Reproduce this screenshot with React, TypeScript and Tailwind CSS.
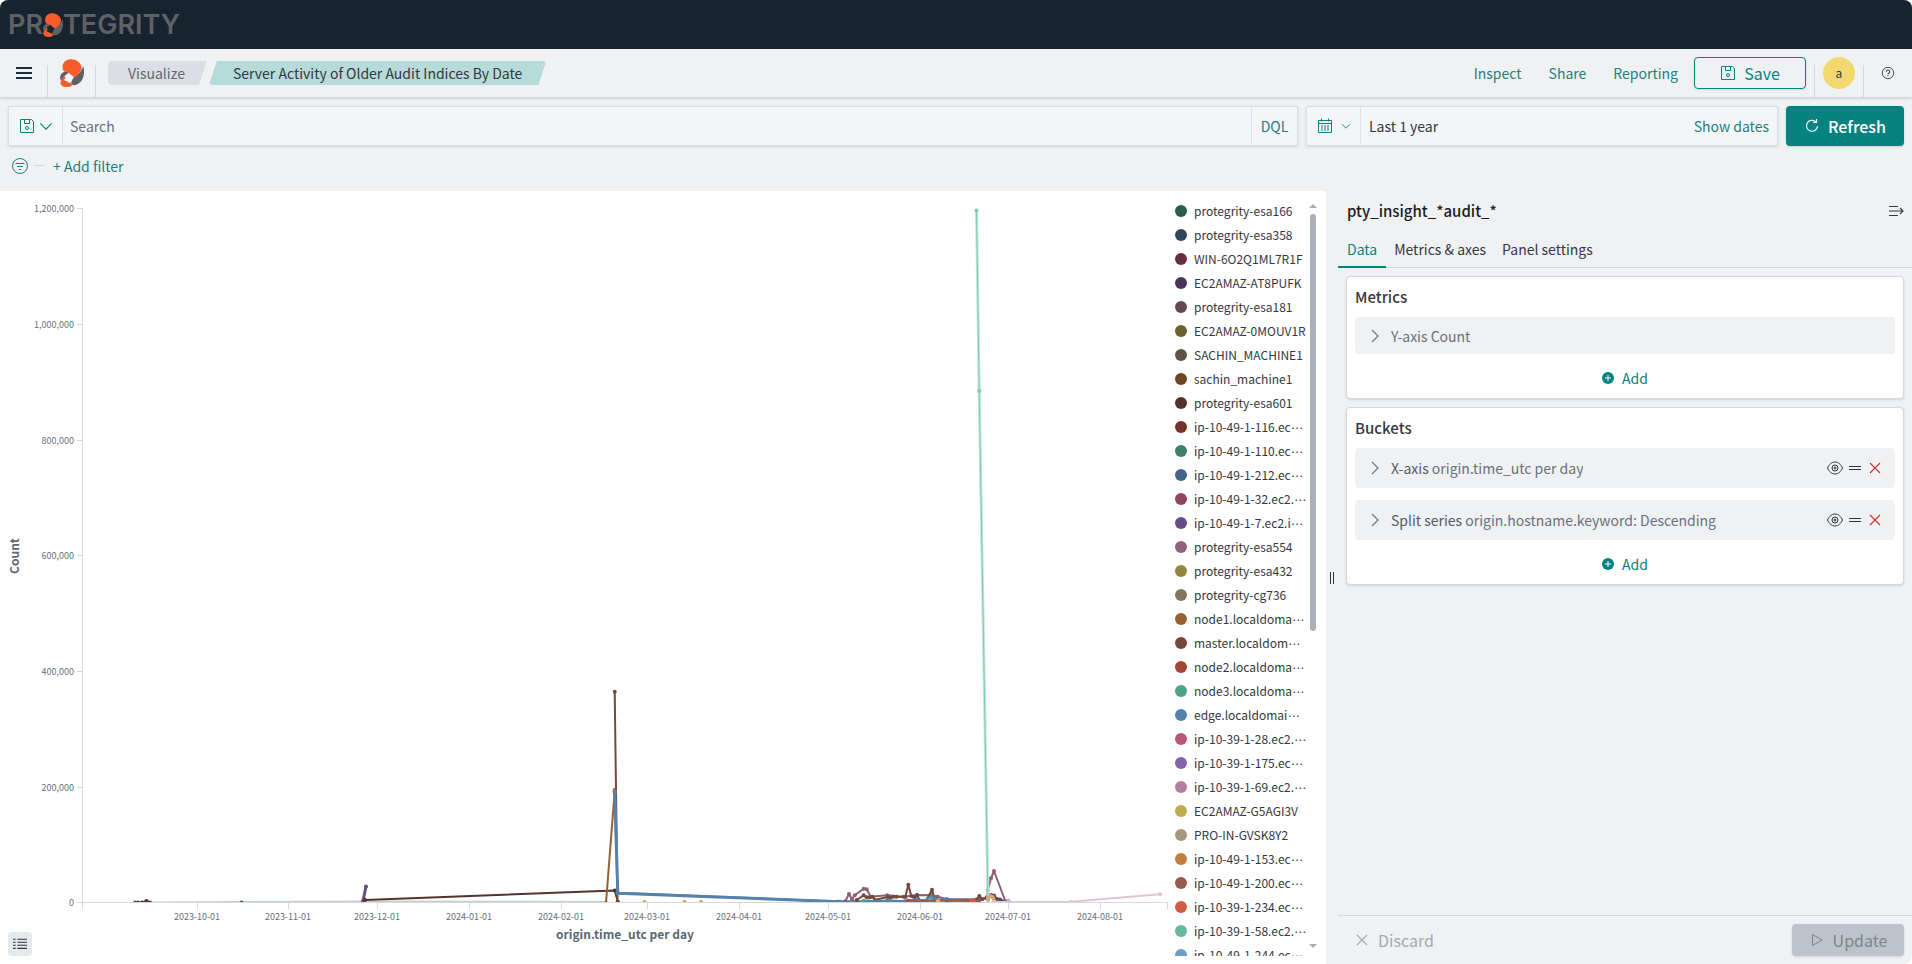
import type { ReactNode } from "react";

type Series = { color: string; points: [number, number][]; dots?: boolean; width?: number };

const legend = [
  { name: "protegrity-esa166", color: "#2b5c4d" },
  { name: "protegrity-esa358", color: "#30475f" },
  { name: "WIN-6O2Q1ML7R1F", color: "#682f42" },
  { name: "EC2AMAZ-AT8PUFK", color: "#48375c" },
  { name: "protegrity-esa181", color: "#654756" },
  { name: "EC2AMAZ-0MOUV1R", color: "#6a602c" },
  { name: "SACHIN_MACHINE1", color: "#5d5443" },
  { name: "sachin_machine1", color: "#6b4623" },
  { name: "protegrity-esa601", color: "#54332b" },
  { name: "ip-10-49-1-116.ec", color: "#733227", cut: true },
  { name: "ip-10-49-1-110.ec", color: "#3d806c", cut: true },
  { name: "ip-10-49-1-212.ec", color: "#436486", cut: true },
  { name: "ip-10-49-1-32.ec2.", color: "#91425e", cut: true },
  { name: "ip-10-49-1-7.ec2.i", color: "#654e81", cut: true },
  { name: "protegrity-esa554", color: "#8e6479" },
  { name: "protegrity-esa432", color: "#95863e" },
  { name: "protegrity-cg736", color: "#82765e" },
  { name: "node1.localdoma", color: "#966231", cut: true },
  { name: "master.localdom", color: "#76483c", cut: true },
  { name: "node2.localdoma", color: "#a14636", cut: true },
  { name: "node3.localdoma", color: "#4ea28a", cut: true },
  { name: "edge.localdomai", color: "#5581ad", cut: true },
  { name: "ip-10-39-1-28.ec2.", color: "#bb5579", cut: true },
  { name: "ip-10-39-1-175.ec", color: "#8265a6", cut: true },
  { name: "ip-10-39-1-69.ec2.", color: "#b57f9b", cut: true },
  { name: "EC2AMAZ-G5AGI3V", color: "#bfac4f" },
  { name: "PRO-IN-GVSK8Y2", color: "#a69779" },
  { name: "ip-10-49-1-153.ec", color: "#c27e40", cut: true },
  { name: "ip-10-49-1-200.ec", color: "#985c4e", cut: true },
  { name: "ip-10-39-1-234.ec", color: "#d05b46", cut: true },
  { name: "ip-10-39-1-58.ec2.", color: "#65baa1", cut: true },
  { name: "ip-10-49-1-244.ec", color: "#6f9cc9", cut: true },
];

const yTicks = [
  { label: "1,200,000", y: 17 },
  { label: "1,000,000", y: 133 },
  { label: "800,000", y: 249 },
  { label: "600,000", y: 364 },
  { label: "400,000", y: 480 },
  { label: "200,000", y: 596 },
  { label: "0", y: 711 },
];

const xTicks = [
  { label: "2023-10-01", x: 197 },
  { label: "2023-11-01", x: 288 },
  { label: "2023-12-01", x: 377 },
  { label: "2024-01-01", x: 469 },
  { label: "2024-02-01", x: 561 },
  { label: "2024-03-01", x: 647 },
  { label: "2024-04-01", x: 739 },
  { label: "2024-05-01", x: 828 },
  { label: "2024-06-01", x: 920 },
  { label: "2024-07-01", x: 1008 },
  { label: "2024-08-01", x: 1100 },
];

const series: Series[] = [
  { color: "#c3cfcb", points: [[150, 711.5], [241, 711], [363, 710.5], [606, 711]], dots: false },
  { color: "#2b5c4d", points: [[135, 711.5], [241.5, 711.5]], width: 0 },
  { color: "#54332b", points: [[138, 711.5], [142, 711.5], [146.5, 710], [150, 711.5]] },
  { color: "#654e81", points: [[363, 710], [366, 695.5]], width: 3 },
  { color: "#54332b", points: [[365, 709], [614.7, 699.5], [618, 711]] },
  { color: "#966231", points: [[606, 712], [614.7, 600]] },
  { color: "#76483c", points: [[614.7, 500.7], [617.5, 711]] },
  { color: "#a14636", points: [[614.7, 599]] },
  { color: "#4ea28a", points: [[614.7, 600.5], [617.5, 701.8], [838, 710.5]] },
  { color: "#5581ad", points: [[614.7, 601.5], [617.8, 702.3], [840, 710.7], [910, 710.7]], width: 3 },
  {
    color: "#8b5f78",
    points: [
      [845.3, 710.3], [849, 703], [852, 708.3], [854.7, 704.3], [863.7, 697.7], [866.7, 698.3], [870.7, 705.7],
      [887.3, 704.3], [903.3, 705.7], [917.3, 704], [932, 704.3], [937.7, 705.7], [946.7, 708.3], [976.7, 708.3],
      [986.7, 707.3], [987.7, 699], [991, 687.3], [994, 680], [1005.3, 710],
    ],
  },
  {
    color: "#76483c",
    points: [
      [856.7, 709], [863.7, 704.3], [866.7, 706.3], [869.7, 706.3], [872.7, 705.7], [875, 709], [887.3, 706],
      [890.3, 706.5], [893.3, 705.7], [896.3, 705.7], [905.3, 706], [908.3, 693.7], [911.3, 705], [914.3, 706.3],
      [917, 704], [920, 709.7], [926, 709.7], [932, 698.7], [934.7, 708.3], [946.7, 709.7], [976.7, 709],
      [979.3, 705], [982.3, 708.3], [986.7, 706.3],
    ],
  },
  { color: "#654756", points: [[991, 704], [994, 704.5], [997, 708], [1000, 708.5], [1002, 710]] },
  { color: "#4ea28a", points: [[863.7, 709.7], [887.3, 710.3], [890, 709.7], [908, 710.3], [932, 709.3]] },
  {
    color: "#5581ad",
    points: [[868, 710.5], [887.3, 709.5], [905, 710.3], [917, 708.3], [923, 710], [932, 705.5], [935, 709], [946.7, 708.3], [970, 710]],
  },
  { color: "#985c4e", points: [[908, 709.5], [911, 710], [973, 709.5], [979, 710]] },
  { color: "#d05b46", points: [[971, 710], [974, 710]] },
  { color: "#c4e6dc", points: [[976.5, 19.5], [979.2, 200], [988, 709]], dots: false, width: 3 },
  { color: "#7cc9b3", points: [[976.5, 19.5], [979.2, 200], [988, 709]], width: 1 },
  { color: "#e0a272", points: [[988, 708], [990.5, 705], [992.5, 706], [994, 710]], width: 3 },
  { color: "#bfac4f", points: [[644.5, 711]] },
  { color: "#bfac4f", points: [[684.5, 711]] },
  { color: "#bfac4f", points: [[701, 711]] },
  { color: "#e3bd56", points: [[938, 710]] },
  { color: "#e2c3d6", points: [[994, 711], [1071.3, 710.7], [1160, 703.3]] },
  { color: "#a9bfdc", points: [[1008.5, 709.5]] },
];

function Icon({ size = 16, className, children }: { size?: number; className?: string; children: ReactNode }) {
  return (
    <svg
      width={size}
      height={size}
      viewBox="0 0 16 16"
      fill="none"
      stroke="currentColor"
      className={className}
      aria-hidden="true"
    >
      {children}
    </svg>
  );
}

const SaveIcon = () => (
  <Icon>
    <path d="M1.5 1.5h11l2 2v11h-13zM5.5 1.5v4h5v-4" />
    <circle cx="8" cy="10" r="1.5" />
  </Icon>
);

const ChevronDown = ({ size }: { size: number }) => (
  <Icon size={size}>
    <path d="M1.5 5L8 11.5 14.5 5" strokeWidth="1.4" />
  </Icon>
);

const ChevronRight = () => (
  <Icon>
    <path d="M5 2l6 6-6 6" strokeWidth="1.1" />
  </Icon>
);

const CrossIcon = ({ className }: { className?: string }) => (
  <Icon className={className}>
    <path d="M3 3l10 10M13 3L3 13" strokeWidth="1.1" />
  </Icon>
);

function BrandMark({ className, core }: { className: string; core: string }) {
  return (
    <svg viewBox="0 0 24 28" preserveAspectRatio="none" className={className} aria-hidden="true">
      <path d="M23 7c2 5 1 10-1 14-2 3-6 6-9 5-2-1-2-3-1-5l2-3c4-2 8-6 9-11z" fill="#606164" />
      <path d="M6 12l3 2c-3 1-6 4-8 8-2-4-1-8 5-10z" fill="#606164" />
      <path d="M4 17l8 8c1 2-2 3-5 3-5 0-8-3-6-6z" fill="#f85c2a" />
      <path d="M8 15.5l5 3.5-3 5-6-3z" fill={core} />
      <path d="M9.5.3c6-.8 11 3 12 7.200.6 4-3 9-7.500 10.500L9 14c-2-1.200-5-1-6-3C1.800 7 3 1.500 9.500.3z" fill="#f85c2a" />
    </svg>
  );
}

function Chart() {
  return (
    <svg
      viewBox="0 0 1168 773"
      preserveAspectRatio="xMinYMin meet"
      className="h-full min-w-0 flex-1 font-['Noto_Sans_CJK_JP',sans-serif]"
      role="img"
      aria-label="Count by origin.time_utc per day"
    >
      <clipPath id="plot">
        <rect x="82" y="10" width="1086" height="701" />
      </clipPath>
      <g stroke="#d6d9dd" shapeRendering="crispEdges">
        <path d="M82.5 17v701M77 711.5h1090.5v6" fill="none" />
        {yTicks.map((t) => (
          <path key={t.label} d={`M77 ${t.y + 0.5}h5`} />
        ))}
        {xTicks.map((t) => (
          <path key={t.label} d={`M${t.x + 0.5} 712v6`} />
        ))}
      </g>
      <g fill="#69707d" fontSize="9">
        {yTicks.map((t) => (
          <text key={t.label} x="74" y={t.y + 4} textAnchor="end">
            {t.label}
          </text>
        ))}
        {xTicks.map((t) => (
          <text key={t.label} x={t.x} y="729" textAnchor="middle">
            {t.label}
          </text>
        ))}
      </g>
      <g fill="#5a6875" fontSize="12" fontWeight="700" textAnchor="middle">
        <text x="625" y="748">origin.time_utc per day</text>
        <text transform="translate(19 365) rotate(-90)">Count</text>
      </g>
      <g clipPath="url(#plot)">
        {series.map((s, i) => (
          <g key={i}>
            <polyline
              points={s.points.join(" ")}
              fill="none"
              stroke={s.color}
              strokeWidth={s.width ?? 2}
              strokeLinejoin="round"
            />
            {s.dots !== false && s.points.map(([x, y]) => <circle key={x} cx={x} cy={y} r="2" fill={s.color} />)}
          </g>
        ))}
      </g>
    </svg>
  );
}

function Legend() {
  return (
    <div className="mt-2 mb-2 flex w-[158px] shrink-0 overflow-hidden">
      <ul className="min-w-0 flex-1 overflow-hidden pl-[7px]">
        {legend.map((item) => (
          <li key={item.name} className="flex h-6 items-center gap-[7px] whitespace-nowrap text-[12px] text-[#343741]">
            <span className="size-3 shrink-0 rounded-full" style={{ backgroundColor: item.color }} />
            <span>
              {item.name}
              {item.cut && <span className="font-['DejaVu_Sans',sans-serif]">⋯</span>}
            </span>
          </li>
        ))}
      </ul>
      <div className="mr-[9px] flex w-2 shrink-0 flex-col items-center pb-2">
        <span className="mt-[5px] border-x-4 border-b-4 border-x-transparent border-b-[#a9b0b9]" />
        <span className="mt-1.5 h-[417px] w-1.5 rounded-full bg-[#a9b0b9]" />
        <span className="mt-auto border-x-4 border-t-4 border-x-transparent border-t-[#a9b0b9]" />
      </div>
    </div>
  );
}

function AddButton() {
  return (
    <div className="flex h-11 items-center justify-center pt-1">
      <button className="flex items-center gap-2 text-[14px] leading-6 text-[#07827e]">
        <svg width="12" height="12" viewBox="0 0 12 12" aria-hidden="true">
          <circle cx="6" cy="6" r="6" fill="currentColor" />
          <path d="M6 3v6M3 6h6" stroke="#fff" />
        </svg>
        Add
      </button>
    </div>
  );
}

function Bucket({ type, field }: { type: string; field: string }) {
  return (
    <div className="flex h-10 items-center rounded bg-[#f0f1f3] px-3">
      <button className="flex min-w-0 flex-1 items-center gap-2 text-left text-[14px] text-[#69707d]">
        <ChevronRight />
        <span className="truncate">
          <span className="text-[#535b67]">{type}</span> {field}
        </span>
      </button>
      <div className="flex items-center gap-1 text-[#263445]">
        <button aria-label="Disable">
          <Icon>
            <path d="M.5 8C2 4.5 4.7 2 8 2S14 4.5 15.5 8c-1.5 3.5-4.2 6-7.5 6S2 11.5.5 8z" />
            <circle cx="8" cy="8" r="3" />
            <circle cx="8" cy="8" r="1" />
          </Icon>
        </button>
        <button aria-label="Reorder">
          <Icon>
            <path d="M2 6.5h12M2 9.5h12" />
          </Icon>
        </button>
        <button aria-label="Remove" className="text-[#c8322b]">
          <CrossIcon />
        </button>
      </div>
    </div>
  );
}

function Sidebar() {
  return (
    <aside className="flex w-[574px] shrink-0 flex-col">
      <div className="flex h-10 items-center justify-between pr-2 pl-[9px]">
        <h2 className="text-[15px] font-medium text-[#1a1c21]">pty_insight_*audit_*</h2>
        <button aria-label="Collapse panel" className="text-[#343741]">
          <Icon>
            <path d="M1 3.5h9M1 8h14M1 12.5h9M12 5l3 3-3 3" strokeWidth="1.1" />
          </Icon>
        </button>
      </div>
      <div role="tablist" className="flex h-[37px] border-b border-[#d3dae0] text-[14px] text-[#343741]">
        <button role="tab" aria-selected="true" className="-mb-px border-b-2 border-[#07827e] px-[9px] text-[#07827e]">
          Data
        </button>
        <button role="tab" className="px-2">Metrics &amp; axes</button>
        <button role="tab" className="px-2">Panel settings</button>
      </div>

      <div className="flex flex-1 flex-col gap-2 px-2 pt-2">
        <section className="rounded border border-[#d3d8de] bg-white px-2 shadow-sm">
          <h3 className="flex h-10 items-center text-[15px] font-medium text-[#343741]">Metrics</h3>
          <button className="flex h-[37px] w-full items-center gap-2 rounded bg-[#f0f1f3] px-3 text-[14px] text-[#69707d]">
            <ChevronRight />
            Y-axis Count
          </button>
          <AddButton />
        </section>

        <section className="rounded border border-[#d3d8de] bg-white px-2 shadow-sm">
          <h3 className="flex h-10 items-center text-[15px] font-medium text-[#343741]">Buckets</h3>
          <div className="flex flex-col gap-3">
            <Bucket type="X-axis" field="origin.time_utc per day" />
            <Bucket type="Split series" field="origin.hostname.keyword: Descending" />
          </div>
          <AddButton />
        </section>
      </div>

      <div className="flex h-[49px] items-center justify-between border-t border-[#d3d8dc] pr-2 pl-4 text-[16px]">
        <button disabled className="flex items-center gap-2 text-[#a3a9b0]">
          <CrossIcon />
          Discard
        </button>
        <button
          disabled
          className="flex h-8 w-28 items-center justify-center gap-2 rounded bg-[#bdc3ca] text-[#7f858c] shadow-sm"
        >
          <Icon>
            <path d="M3.5 2.5v11L13 8z" strokeLinejoin="round" />
          </Icon>
          Update
        </button>
      </div>
    </aside>
  );
}

export default function App() {
  return (
    <div className="flex h-screen flex-col overflow-hidden rounded-lg bg-[#f0f1f3] font-['Noto_Sans_CJK_JP',sans-serif] leading-6 text-[#343741]">
      <header className="flex h-[49px] shrink-0 items-center bg-[#172430] pl-2">
        <a
          href="#"
          aria-label="Protegrity"
          className="flex items-center font-['Inter',sans-serif] text-[27px] font-semibold text-[#606164]"
        >
          PR
          <BrandMark className="h-6 w-5" core="#172430" />
          TEGRITY
        </a>
      </header>

      <nav className="flex h-[49px] shrink-0 border-b border-[#d3d7db] text-[14px] shadow-sm">
        <button aria-label="Menu" className="flex w-[47px] items-center justify-center text-[#1c2d41]">
          <Icon>
            <path d="M0 3h16M0 8h16M0 13h16" strokeWidth="2" />
          </Icon>
        </button>
        <div className="mt-4 w-px bg-[#d3d7db]" />
        <a href="#" aria-label="Home" className="flex w-[47px] items-center justify-center">
          <BrandMark className="h-7 w-6" core="#ffffff" />
        </a>
        <div className="mt-4 w-px bg-[#d3d7db]" />
        <ol className="flex min-w-0 flex-1 items-center gap-0.5 pl-3">
          <li className="rounded-l bg-[#dcdee4] [clip-path:polygon(0_0,100%_0,calc(100%-8px)_100%,0_100%)]">
            <a href="#" className="block h-6 pr-[22px] pl-5 text-[#5f6773]">Visualize</a>
          </li>
          <li className="rounded bg-[#b6dbd9] [clip-path:polygon(8px_0,100%_0,calc(100%-8px)_100%,0_100%)]">
            <span className="block h-6 truncate px-6">Server Activity of Older Audit Indices By Date</span>
          </li>
        </ol>
        <div className="flex shrink-0 items-center gap-[27px] pr-4 text-[#1f7f7b]">
          <button>Inspect</button>
          <button>Share</button>
          <button>Reporting</button>
        </div>
        <div className="flex items-center pr-2">
          <button className="flex h-8 w-28 items-center justify-center gap-2 rounded border border-[#07827e] text-[16px] text-[#07827e] shadow-sm">
            <SaveIcon />
            Save
          </button>
        </div>
        <div className="mt-4 w-px bg-[#d3d7db]" />
        <div className="flex items-center px-2">
          <button className="size-8 rounded-full bg-[#f1d86f] text-[12px] text-[#343741]">a</button>
        </div>
        <div className="mt-4 w-px bg-[#d3d7db]" />
        <button aria-label="Help" className="flex w-12 items-center justify-center">
          <Icon size={14}>
            <circle cx="8" cy="8" r="6.5" />
            <path d="M6 6.5a2 2 0 1 1 2.7 1.9c-.5.2-.7.5-.7 1.1M8 10.5v1.3" strokeWidth="1.2" />
          </Icon>
        </button>
      </nav>

      <div className="flex shrink-0 gap-2 px-2 pt-2 text-[14px]">
        <div className="flex h-10 min-w-0 flex-1 border border-[#d7e0e1] bg-[#f3f5f6] shadow-sm">
          <button aria-label="Saved queries" className="flex w-[54px] items-center justify-center gap-1 border-r border-[#dde2e4] text-[#07827e]">
            <SaveIcon />
            <ChevronDown size={14} />
          </button>
          <input
            aria-label="Search"
            placeholder="Search"
            className="min-w-0 flex-1 bg-transparent px-[7px] outline-none placeholder:text-[#69707d]"
          />
          <button className="w-[46px] border-l border-[#dde2e4] text-[#1f7f7b]">DQL</button>
        </div>
        <div className="flex h-10 w-[472px] border border-[#d7e0e1] bg-[#f3f5f6] shadow-sm">
          <button aria-label="Quick select" className="flex w-[54px] items-center justify-center gap-2 border-r border-[#dde2e4] text-[#07827e]">
            <Icon>
              <path d="M1.5 2.5h13v12h-13zM1.5 5.5h13M4.5.5v3M11.5.5v3" />
              <path d="M4 8h8M4 10h8M4 12h8" strokeDasharray="2 1" />
            </Icon>
            <ChevronDown size={10} />
          </button>
          <button className="flex-1 pl-2 text-left">Last 1 year</button>
          <button className="px-2 text-[#1f7f7b]">Show dates</button>
        </div>
        <button className="flex h-10 w-[118px] items-center justify-center gap-2 rounded bg-[#07827e] text-[16px] font-medium text-white shadow-sm">
          <Icon>
            <path d="M12 4a5.5 5.5 0 1 0 1.5 4M12.5 1v3.5H9" strokeWidth="1.1" />
          </Icon>
          Refresh
        </button>
      </div>

      <div className="flex h-[45px] shrink-0 items-center pb-1.5 pl-3 text-[14px] text-[#1f7f7b]">
        <button aria-label="Filter options">
          <Icon>
            <circle cx="8" cy="8" r="7.5" />
            <path d="M3.5 5.5h9M5 8.5h6M7 11.5h2" />
          </Icon>
        </button>
        <span className="ml-1.5 h-px w-2.5 bg-[#d3d7db]" />
        <button className="ml-[9px]">+ Add filter</button>
      </div>

      <main className="flex min-h-0 flex-1">
        <div className="relative flex min-w-0 flex-1 bg-white">
          <Chart />
          <Legend />
          <button
            aria-label="Toggle legend"
            className="absolute bottom-2 left-2 flex size-6 items-center justify-center rounded bg-[#e6e9ec] text-[#263445]"
          >
            <Icon size={14}>
              <path d="M0 2.5h3M0 6h3M0 9.5h3M0 13h3M5 2.5h11M5 6h11M5 9.5h11M5 13h11" strokeWidth="1.2" />
            </Icon>
          </button>
        </div>
        <div className="flex w-3 shrink-0 items-center justify-center gap-0.5">
          <span className="h-3 w-px bg-[#343741]" />
          <span className="h-3 w-px bg-[#343741]" />
        </div>
        <Sidebar />
      </main>
    </div>
  );
}
